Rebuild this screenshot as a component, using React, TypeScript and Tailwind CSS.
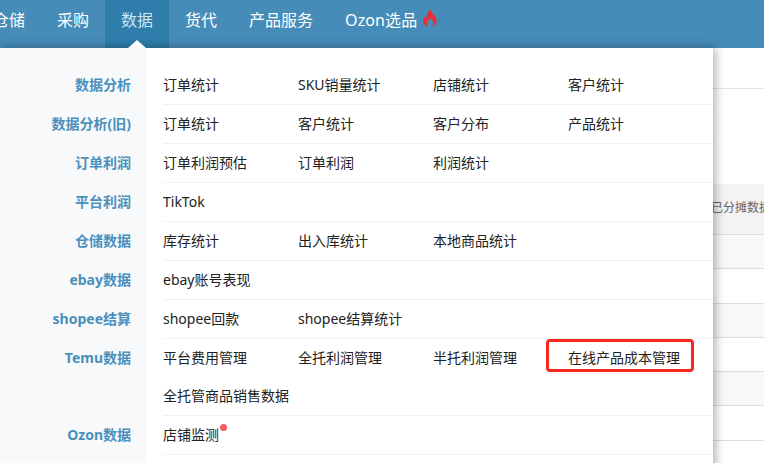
const font = "font-['Noto_Sans','Noto_Sans_CJK_SC',sans-serif]";

const navItems = ["仓储", "采购", "数据", "货代", "产品服务"];

const menuRows = [
  { label: "数据分析", items: ["订单统计", "SKU销量统计", "店铺统计", "客户统计"] },
  { label: "数据分析(旧)", items: ["订单统计", "客户统计", "客户分布", "产品统计"] },
  { label: "订单利润", items: ["订单利润预估", "订单利润", "利润统计"] },
  { label: "平台利润", items: ["TikTok"] },
  { label: "仓储数据", items: ["库存统计", "出入库统计", "本地商品统计"] },
  { label: "ebay数据", items: ["ebay账号表现"] },
  { label: "shopee结算", items: ["shopee回款", "shopee结算统计"] },
  {
    label: "Temu数据",
    items: ["平台费用管理", "全托利润管理", "半托利润管理", "在线产品成本管理", "全托管商品销售数据"],
  },
  { label: "Ozon数据", items: ["店铺监测"] },
  { label: "", items: [] },
];

function FlameIcon() {
  return (
    <svg width="16" height="18" viewBox="0 0 16 18" className="ml-[5px]">
      <path
        d="M8.5 0.5C9 3 11 4.5 12.5 6.5C14.3 8.8 15 10.6 14.6 12.8C14 15.8 11.6 17.4 10 17.6C11.6 16 12.2 13.8 10.6 11.6C10 10.8 9.4 10 9 9C8 10.2 7.6 11 6.4 11.6C5 12.6 4.6 15.4 6.2 17.6C3.4 17 1.2 15 1 12.2C0.8 10 2 8.2 3.2 7C3.4 8 3.8 8.8 4.6 9.2C4.4 6 5.8 2.6 8.5 0.5Z"
        fill="#e5303c"
      />
    </svg>
  );
}

function TopNav() {
  return (
    <div className="flex h-12 shrink-0 items-stretch bg-[#468cb8] pl-0 text-base leading-[40px] text-white">
      <div className="ml-[-23px] flex">
        {navItems.map((item) => (
          <div
            key={item}
            className={item === "数据" ? "bg-[#2f7dab] px-4 text-[#c9e6f7]" : "px-4"}
          >
            {item}
          </div>
        ))}
        <div className="flex items-start px-4 tracking-[0.1px]">
          Ozon选品
          <span className="mt-[9px]">
            <FlameIcon />
          </span>
        </div>
      </div>
    </div>
  );
}

function BackgroundTable() {
  return (
    <div className="flex flex-col items-stretch bg-white pl-[713px] text-xs text-[#666]">
      <div className="h-[41px] border-b border-[#e4e4e4]" />
      <div className="h-[95px]" />
      <div className="h-[51px] whitespace-nowrap border-b border-[#dcdcdc] bg-[#f3f3f3] pt-[1px] leading-[46px]">
        <span className="ml-[-2px]">已分摊数据</span>
      </div>
      {[0, 1, 2, 3, 4, 5].map((row) => (
        <div
          key={row}
          className={`h-[34.25px] border-b border-[#dcdcdc] ${row % 2 === 0 ? "bg-[#f8f8f8]" : "bg-white"}`}
        />
      ))}
    </div>
  );
}

function MenuItem({ name }: { name: string }) {
  return (
    <div className="relative h-[38px] w-[135px] whitespace-nowrap leading-[38px]">
      {name}
      {name === "在线产品成本管理" && (
        <div className="absolute left-[-22px] top-0 h-[33px] w-[148px] rounded-[4px] border-[3px] border-[#f5281e]" />
      )}
      {name === "店铺监测" && (
        <div className="absolute left-[57px] top-[8px] h-[7px] w-[7px] rounded-full bg-[#fb5a60]" />
      )}
    </div>
  );
}

function DropdownMenu() {
  return (
    <div className="absolute left-0 top-12 w-[713px] bg-white text-sm text-[#222] shadow-[2px_0_10px_rgba(0,0,0,0.35)]">
      <div className="absolute left-[137px] top-[-8px] h-0 w-0 -translate-x-1/2 border-x-[9px] border-b-[8px] border-x-transparent border-b-white" />
      <div className="flex h-[18px]">
        <div className="w-[147px] bg-[#f7f9fb]" />
      </div>
      {menuRows.map((row, i) => (
        <div key={i} className="flex">
          <div className="w-[147px] shrink-0 bg-[#f7f9fb] pr-4 text-right font-bold leading-[38px] text-[#4a90bc]">
            {row.label}
          </div>
          <div className="ml-4 flex flex-1 flex-wrap border-b border-[#f0f0f0]">
            {row.items.map((name) => (
              <MenuItem key={name} name={name} />
            ))}
            {row.items.length === 0 && <div className="h-[38px]" />}
          </div>
        </div>
      ))}
    </div>
  );
}

export default function App() {
  return (
    <div className={`relative flex h-[463px] w-[764px] flex-col overflow-hidden bg-white ${font}`}>
      <TopNav />
      <BackgroundTable />
      <DropdownMenu />
    </div>
  );
}
